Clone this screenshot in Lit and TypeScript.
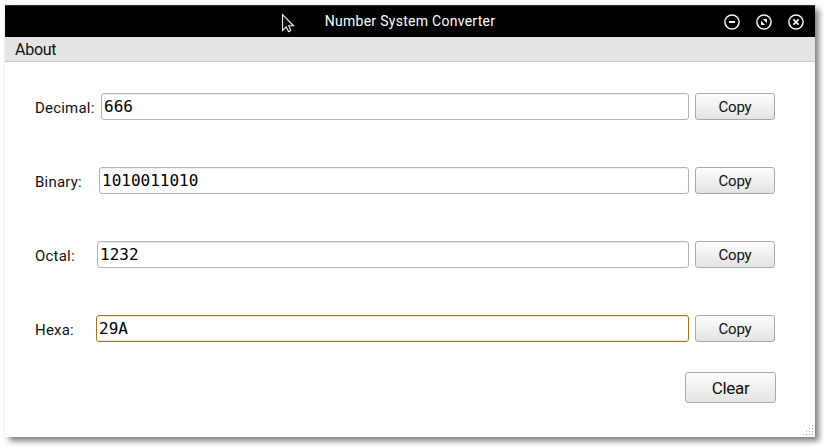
import { LitElement, html, css, svg } from "lit";
import { customElement, property } from "lit/decorators.js";

@customElement("push-button")
class PushButton extends LitElement {
  static styles = css`
    :host {
      display: flex;
      align-items: center;
      justify-content: center;
      box-sizing: border-box;
      border: 1px solid #a9a9a9;
      border-radius: 3px;
      background: linear-gradient(#fdfdfd, #e3e3e3);
      color: #111;
      white-space: nowrap;
    }
  `;
  render() {
    return html`<slot></slot>`;
  }
}

@customElement("number-field")
class NumberField extends LitElement {
  @property() label = "";
  @property() value = "";

  static styles = css`
    :host {
      display: flex;
      height: 27px;
      align-items: stretch;
    }
    .label {
      width: var(--label-width, 66px);
      flex: none;
      font-size: 15px;
      line-height: 30px;
      white-space: nowrap;
      letter-spacing: 0.2px;
    }
    .field {
      flex: 1;
      box-sizing: border-box;
      border: 1px solid #b4b4b4;
      border-radius: 3px;
      background: #fff;
      box-shadow: inset 0 1px #f0f0f0;
      padding-left: 2px;
      font: 16px/25px "DejaVu Sans Mono", monospace;
      color: #000;
    }
    :host([focused]) .field {
      border-color: #a07428;
      box-shadow: inset 0 -1px #eeeadf, inset 0 1px #eeeadf;
    }
    push-button {
      width: 80px;
      margin-left: 6px;
      font-size: 15px;
      letter-spacing: -0.2px;
    }
  `;

  render() {
    return html`
      <div class="label">${this.label}</div>
      <div class="field">${this.value}</div>
      <push-button>Copy</push-button>
    `;
  }
}

@customElement("app-root")
class AppRoot extends LitElement {
  static styles = css`
    :host {
      display: block;
      box-sizing: border-box;
      width: 824px;
      height: 446px;
      padding: 5px 9px 9px 5px;
      background: #fff;
      overflow: hidden;
      font-family: Roboto, "Liberation Sans", sans-serif;
      color: #111;
    }
    .window {
      position: relative;
      width: 810px;
      height: 432px;
      background: #fff;
      box-shadow: 4px 4px 6px rgba(0, 0, 0, 0.5), 0 0 1px rgba(0, 0, 0, 0.1);
    }
    .titlebar {
      display: grid;
      grid-template-columns: 1fr auto 1fr;
      align-items: center;
      box-sizing: border-box;
      height: 32px;
      border-top: 1px solid #2c2f2e;
      background: #000;
      color: #fff;
    }
    .title {
      grid-column: 2;
      padding-bottom: 2px;
      font-size: 14px;
      letter-spacing: 0.28px;
    }
    .controls {
      display: flex;
      justify-content: flex-end;
      gap: 16px;
      padding-right: 11px;
    }
    .controls svg {
      display: block;
    }
    .menubar {
      box-sizing: border-box;
      height: 25px;
      padding-left: 10px;
      border-bottom: 1px solid #c8c8c8;
      background: #e4e4e4;
      font-size: 16px;
      line-height: 25px;
      letter-spacing: -0.25px;
    }
    .content {
      display: flex;
      flex-direction: column;
      gap: 47px;
      padding: 31px 40px 0 30px;
    }
    .binary { --label-width: 64px; }
    .octal { --label-width: 62px; }
    .hexa { --label-width: 61px; }
    .clear {
      width: 91px;
      height: 31px;
      margin: 30px 39px 0 auto;
      font-size: 17px;
      letter-spacing: -0.3px;
    }
    .cursor {
      position: absolute;
      left: 276px;
      top: 8px;
    }
    .grip {
      position: absolute;
      right: 2px;
      bottom: 2px;
    }
  `;

  private control(glyph: unknown) {
    return html`<svg width="16" height="16" viewBox="0 0 16 16" fill="none" stroke="#f2f2f2">
      <circle cx="8" cy="8" r="7.1" stroke-width="1.5" />
      ${glyph}
    </svg>`;
  }

  render() {
    const dots = [0, 1, 2, 3].flatMap((row) =>
      Array.from({ length: row + 1 }, (_, i) => ({ x: 9 - i * 3, y: row * 3 }))
    );
    return html`
      <div class="window">
        <div class="titlebar">
          <div class="title">Number System Converter</div>
          <div class="controls">
            ${this.control(svg`<path d="M5 8h6" stroke-width="2" />`)}
            ${this.control(svg`<path d="M6.8 5H11v4.2zM5 6.8V11h4.2z" fill="#f2f2f2" stroke="none" />`)}
            ${this.control(svg`<path d="M5.4 5.4l5.2 5.2M10.6 5.4l-5.2 5.2" stroke-width="1.9" />`)}
          </div>
        </div>
        <div class="menubar">About</div>
        <div class="content">
          <number-field label="Decimal:" value="666"></number-field>
          <number-field class="binary" label="Binary:" value="1010011010"></number-field>
          <number-field class="octal" label="Octal:" value="1232"></number-field>
          <number-field class="hexa" label="Hexa:" value="29A" focused></number-field>
        </div>
        <push-button class="clear">Clear</push-button>
        <svg class="cursor" width="14" height="20" viewBox="0 0 14 20">
          <path
            d="M1.5 1.5v16l3.7-3.5 2.3 4.6q1.7 0 2.2-1.3L7.8 12.8h4.8z"
            fill="#111" stroke="#eee" stroke-width="1.1"
          />
        </svg>
        <svg class="grip" width="10" height="10" viewBox="0 0 10 10">
          ${dots.map((d) => svg`<rect x=${d.x} y=${d.y} width="1" height="1" fill="#aaa" />`)}
        </svg>
      </div>
    `;
  }
}
